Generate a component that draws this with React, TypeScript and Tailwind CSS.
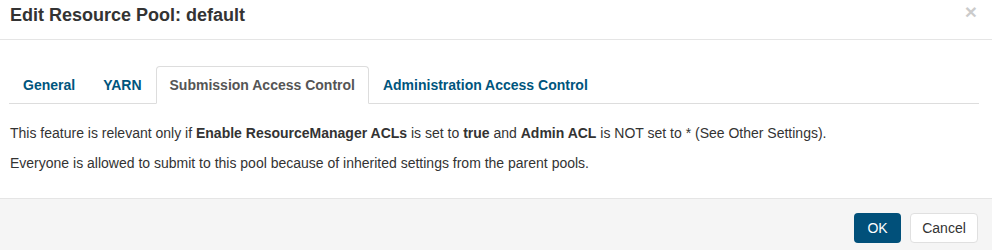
import React from "react";

// Edit Resource Pool modal — Submission Access Control tab
const tabs = [
	{ name: "General", active: false },
	{ name: "YARN", active: false },
	{ name: "Submission Access Control", active: true },
	{ name: "Administration Access Control", active: false },
];

const App = () => {
	return (
		<div className="w-[992px] h-[250px] flex flex-col bg-white text-[#333] font-['Liberation_Sans',Arial,sans-serif] overflow-hidden">
			<div className="h-[40px] shrink-0 flex items-start justify-between border-b border-[#e5e5e5] pl-[10px] pr-[15px]">
				<h4 className="pt-[5px] text-[18px] leading-[20px] font-bold text-[#333]">
					Edit Resource Pool: default
				</h4>
				<button
					className="pt-[1px] text-[21px] leading-[21px] font-bold text-black opacity-20"
					aria-label="Close"
				>
					×
				</button>
			</div>

			<div className="flex-1 pt-[26px] pl-[9px] pr-[13px]">
				<ul className="flex border-b border-[#ddd]">
					{tabs.map((tab) => (
						<li key={tab.name} className="-mb-[1px]">
							<a
								className={
									tab.active
										? "block px-[13px] py-[10px] text-[14px] leading-[16px] font-bold text-[#555] bg-white border border-[#ddd] border-b-transparent rounded-t-[4px]"
										: "block px-[13px] py-[10px] text-[14px] leading-[16px] font-bold text-[#00557d] border border-transparent"
								}
							>
								{tab.name}
							</a>
						</li>
					))}
				</ul>
				<div className="pt-[19px] pl-[1px] text-[14px] leading-[20px]">
					<p>
						This feature is relevant only if <b>Enable ResourceManager ACLs</b> is set to{" "}
						<b>true</b> and <b>Admin ACL</b> is NOT set to * (See Other Settings).
					</p>
					<p className="mt-[10px]">
						Everyone is allowed to submit to this pool because of inherited settings from the
						parent pools.
					</p>
				</div>
			</div>

			<div className="h-[52px] shrink-0 flex items-start justify-end gap-[9px] pt-[14px] pr-[14px] bg-[#f5f5f5] border-t border-[#e5e5e5]">
				<button className="w-[47px] h-[30px] rounded-[4px] bg-[#01507a] text-white text-[14px] leading-none">
					OK
				</button>
				<button className="w-[68px] h-[30px] rounded-[4px] bg-white border border-[#e0e0e0] text-[#333] text-[14px] leading-none">
					Cancel
				</button>
			</div>
		</div>
	);
};

export default App;
